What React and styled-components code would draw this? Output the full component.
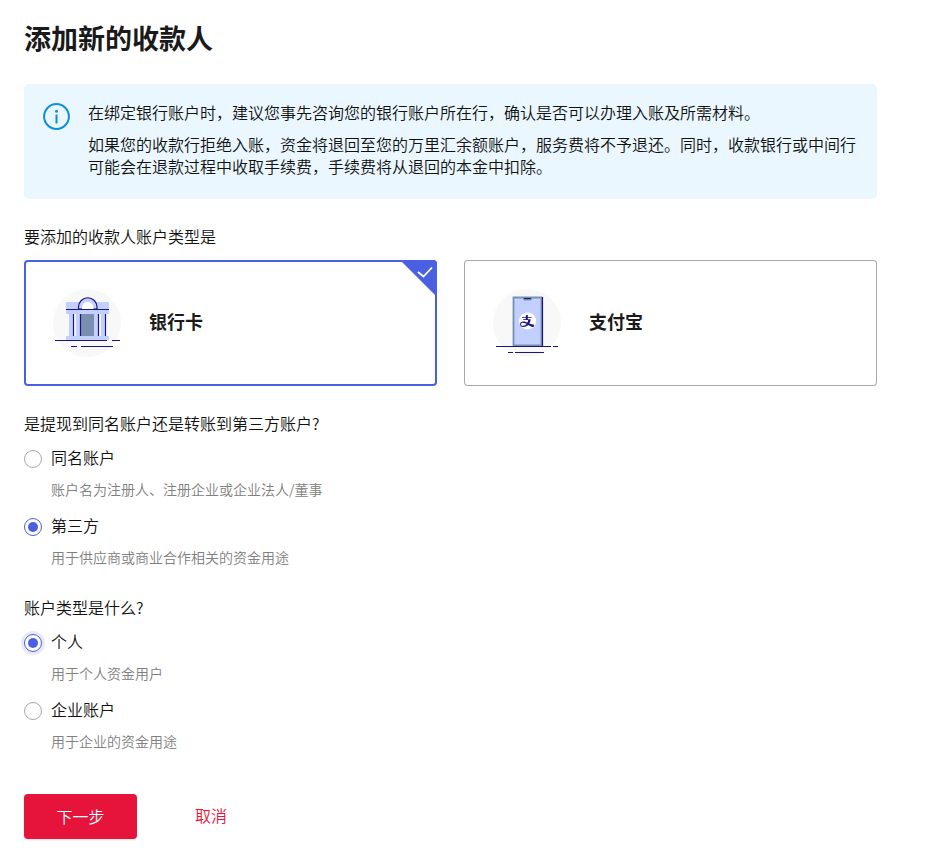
import { useState } from 'react';
import styled, { createGlobalStyle } from 'styled-components';
import { AiOutlineAlipay } from 'react-icons/ai';

const GlobalStyle = createGlobalStyle`
* {
    box-sizing: border-box;
}

body {
    margin: 0;
    background: #fff;
    color: #111;
    font-family: "Noto Sans CJK SC", sans-serif;
    font-size: 16px;
    font-weight: 350;
    line-height: 22px;
}

h1, p, fieldset {
    margin: 0;
    padding: 0;
    border: 0;
}
`;

const Page = styled.main`
padding: 20px 75px 11px 24px;
`;

const Title = styled.h1`
margin-bottom: 28px;
color: #1a1a1a;
font-size: 27px;
font-weight: 700;
line-height: 36px;
`;

const Notice = styled.section`
display: flex;
gap: 18px;
padding: 17px 19px 22px;
background: #eaf7ff;
border-radius: 5px;

svg {
    flex: none;
    margin-top: 2px;
}

p + p {
    margin-top: 10px;
}
`;

const Group = styled.fieldset`
min-width: 0;
margin-top: ${({ $gap }) => $gap}px;

legend {
    padding: 0;
}
`;

const Cards = styled.div`
display: grid;
grid-template-columns: 1fr 1fr;
gap: 27px;
margin-top: 13px;
`;

const Card = styled.label`
position: relative;
display: flex;
align-items: center;
gap: 28px;
height: 126px;
padding: 0 29px;
border-radius: 4px;
box-shadow: inset 0 0 0 ${({ $checked }) => ($checked ? '2px #4a5fe2' : '1px #a8a8a8')};
overflow: hidden;
cursor: pointer;

input {
    position: absolute;
    opacity: 0;
}
`;

const CardName = styled.span`
padding-bottom: 4px;
color: #1a1a1a;
font-size: 18px;
font-weight: 700;
`;

const Corner = styled.svg`
position: absolute;
top: 0;
right: 0;
`;

const Option = styled.div`
display: grid;
grid-template-columns: 18px 1fr;
column-gap: 9px;
row-gap: 6px;
align-items: center;
margin-top: ${({ $first }) => ($first ? 12 : 14)}px;

label {
    padding-bottom: 4px;
}
`;

const Radio = styled.input`
appearance: none;
display: grid;
place-items: center;
width: 18px;
height: 18px;
margin: 0;
border: 1px solid #a8a8a8;
border-radius: 50%;
background: #fff;

&:checked {
    border-color: #4a5fe2;
}

&:checked::before {
    content: "";
    width: 10px;
    height: 10px;
    border-radius: 50%;
    background: #4a5fe2;
}

&:focus {
    outline: none;
    box-shadow: 0 0 0 3px #e6eafc;
}
`;

const Hint = styled.p`
grid-column: 2;
color: #808080;
font-size: 14px;
`;

const Actions = styled.div`
display: flex;
align-items: center;
gap: 58px;
margin-top: 42px;
`;

const NextButton = styled.button`
min-width: 113px;
height: 45px;
padding: 0 32px 2px;
border: 0;
border-radius: 4px;
background: #e6143a;
color: #fff;
font: inherit;
box-shadow: 0 1px 2px #0000001f;
`;

const CancelLink = styled.a`
padding-bottom: 3px;
color: #e6143a;
text-decoration: none;
`;

function InfoIcon() {
    return (
    <svg width="27" height="27" viewBox="0 0 27 27" fill="none" aria-hidden="true">
        <circle cx="13.5" cy="13.5" r="12.4" stroke="#0a8fdc" strokeWidth="2" />
        <circle cx="13.5" cy="8.2" r="1.5" fill="#0a8fdc" />
        <path d="M13.5 11.5v9" stroke="#0a8fdc" strokeWidth="2" />
    </svg>
    )
}

function BankIcon() {
    return (
    <svg width="68" height="68" viewBox="0 0 68 68" fill="none" aria-hidden="true">
        <circle cx="34" cy="34" r="34" fill="#f8f8f8" />
        <path d="M13 13h43v12H13zM16 25h4.5v22H16zM23 25h4.5v22H23zM41 25h4.5v22H41zM48 25h4.5v22H48zM13 47h43v4H13z" fill="#c2d0ff" />
        <path d="M25.5 20v-2a9.25 9.25 0 0 1 18.5 0v2z" fill="#c2d0ff" stroke="#1b1580" strokeWidth="1.2" />
        <path d="M29 20v-1.5a5.75 5.75 0 0 1 11.5 0V20z" fill="#fff" />
        <path d="M28 25h13v22H28z" fill="#7a8fb0" />
        <path d="M13 20.5h43M20.5 25v22M27.5 25v22M45.5 25v22M52.5 25v22M2 51.5h52M59 51.5h8M18 57.5h6M28 57.5h32" stroke="#1b1580" strokeWidth="1.2" />
    </svg>
    )
}

function PhoneIcon() {
    return (
    <svg width="68" height="68" viewBox="0 0 68 68" fill="none" aria-hidden="true">
        <circle cx="34" cy="34" r="34" fill="#f8f8f8" />
        <path d="M20.5 8.5h28v48h-28z" fill="#c2d0ff" stroke="#7a8fb0" strokeWidth="1.8" />
        <path d="M30 8h9v2l-1 1.5h-7L30 10z" fill="#7a8fb0" />
        <path d="M31 9.5h7M49.5 8v49M3 57.5h55M60 57.5h5M15 63.5h5M22 63.5h29" stroke="#1b1580" strokeWidth="1.2" />
        <circle cx="34.5" cy="32" r="8.5" fill="#fff" />
        <AiOutlineAlipay x="26" y="24" width="17" height="15" preserveAspectRatio="none" color="#1b1580" />
    </svg>
    )
}

const accounts = [
    { value: 'bank', label: '银行卡', Icon: BankIcon },
    { value: 'alipay', label: '支付宝', Icon: PhoneIcon },
];

const owners = [
    { value: 'same', label: '同名账户', hint: '账户名为注册人、注册企业或企业法人/董事' },
    { value: 'third', label: '第三方', hint: '用于供应商或商业合作相关的资金用途' },
];

const kinds = [
    { value: 'person', label: '个人', hint: '用于个人资金用户' },
    { value: 'company', label: '企业账户', hint: '用于企业的资金用途' },
];

function RadioGroup({ name, title, options, value, onChange, gap, focused }) {
    return (
    <Group $gap={gap}>
        <legend>{title}</legend>
        {options.map((option, index) => (
        <Option key={option.value} $first={index === 0}>
            <Radio
            type="radio"
            id={option.value}
            name={name}
            checked={value === option.value}
            autoFocus={focused && value === option.value}
            onChange={() => onChange(option.value)}
            />
            <label htmlFor={option.value}>{option.label}</label>
            <Hint>{option.hint}</Hint>
        </Option>
        ))}
    </Group>
    )
}

export default function App() {
    const [account, setAccount] = useState('bank');
    const [owner, setOwner] = useState('third');
    const [kind, setKind] = useState('person');

    return (
    <Page>
        <GlobalStyle />
        <Title>添加新的收款人</Title>
        <Notice>
        <InfoIcon />
        <div>
            <p>在绑定银行账户时，建议您事先咨询您的银行账户所在行，确认是否可以办理入账及所需材料。</p>
            <p>如果您的收款行拒绝入账，资金将退回至您的万里汇余额账户，服务费将不予退还。同时，收款银行或中间行可能会在退款过程中收取手续费，手续费将从退回的本金中扣除。</p>
        </div>
        </Notice>
        <Group $gap={26}>
        <legend>要添加的收款人账户类型是</legend>
        <Cards>
            {accounts.map(({ value, label, Icon }) => (
            <Card key={value} $checked={account === value}>
                <input
                type="radio"
                name="account"
                checked={account === value}
                onChange={() => setAccount(value)}
                />
                <Icon />
                <CardName>{label}</CardName>
                {account === value && (
                <Corner width="37" height="37" viewBox="0 0 37 37" fill="none" aria-hidden="true">
                    <path d="M0 0h37v37z" fill="#4a5fe2" />
                    <path d="M18 12l5.5 4.5L32 7.5" stroke="#fff" strokeWidth="1.8" />
                </Corner>
                )}
            </Card>
            ))}
        </Cards>
        </Group>
        <RadioGroup
        name="owner"
        title="是提现到同名账户还是转账到第三方账户?"
        options={owners}
        value={owner}
        onChange={setOwner}
        gap={26}
        />
        <RadioGroup
        name="kind"
        title="账户类型是什么?"
        options={kinds}
        value={kind}
        onChange={setKind}
        gap={28}
        focused
        />
        <Actions>
        <NextButton type="button">下一步</NextButton>
        <CancelLink href="#">取消</CancelLink>
        </Actions>
    </Page>
    )
}
